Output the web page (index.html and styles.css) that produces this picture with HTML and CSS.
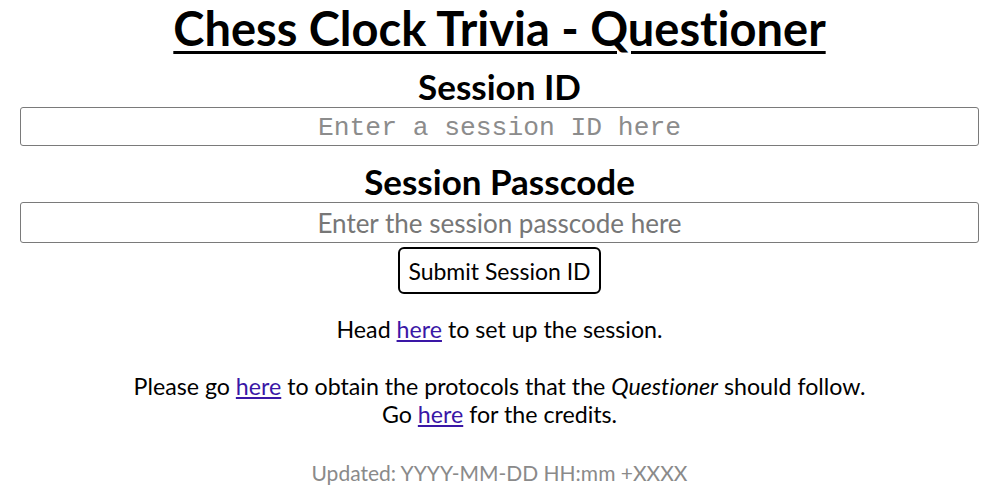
FILE: index.html
```html
<!DOCTYPE html>
<html>
<head>
<meta charset="utf-8">
<link rel="stylesheet" href="styles.css">
</head>
<body>
<main class="page">
  <h1 class="title">Chess Clock Trivia - Questioner</h1>
  <h2 class="label label-first">Session ID</h2>
  <input class="field mono" type="text" placeholder="Enter a session ID here">
  <h2 class="label">Session Passcode</h2>
  <input class="field sans" type="password" placeholder="Enter the session passcode here">
  <button class="submit">Submit Session ID</button>
  <p class="text text-first">Head <a href="#">here</a> to set up the session.</p>
  <p class="text">Please go <a href="#">here</a> to obtain the protocols that the <em>Questioner</em> should follow.<br>Go <a href="#">here</a> for the credits.</p>
  <p class="updated">Updated: YYYY-MM-DD HH:mm +XXXX</p>
</main>
</body>
</html>
```

FILE: styles.css
```css
* { box-sizing: border-box; }
html, body { margin: 0; padding: 0; background: #fff; }
body {
  font-family: Lato, "Liberation Sans", sans-serif;
  font-variant-ligatures: none;
  color: #000;
}
.page {
  display: flex;
  flex-direction: column;
  align-items: center;
  padding: 0 21px 0 20px;
  text-align: center;
}
.title {
  font-size: 47px;
  font-weight: 700;
  line-height: 1.2;
  margin: 0;
  text-decoration: underline;
  text-decoration-thickness: 3px;
  text-underline-offset: 5px;
}
.label {
  font-size: 35px;
  font-weight: 700;
  line-height: 1.2;
  margin: 14px 0 0;
}
.label-first { margin-top: 9px; }
.field {
  width: 100%;
  border: 1px solid #7a7a7a;
  border-radius: 3px;
  text-align: center;
  padding: 0 4px;
  color: #000;
  background: #fff;
}
.field::placeholder { color: #777; }
.field.mono {
  height: 39px;
  font-family: "Liberation Mono", monospace;
  font-size: 26.3px;
  padding-top: 2px;
}
.field.mono::placeholder { color: #8c8c8c; }
.field.sans {
  height: 41px;
  font-family: Lato, sans-serif;
  font-size: 26px;
}
.submit {
  margin-top: 4px;
  height: 47px;
  padding: 0 8px;
  background: #fff;
  border: 2px solid #000;
  border-radius: 6px;
  font-family: Lato, sans-serif;
  font-size: 23px;
  color: #000;
}
.text {
  font-size: 23.2px;
  line-height: 28px;
  margin: 29px 0 0;
}
.text-first { margin-top: 21px; }
.text a { color: #3a17a6; }
.updated {
  font-size: 21px;
  line-height: 28px;
  color: #8a8a8a;
  margin: 31px 0 0;
}
```
